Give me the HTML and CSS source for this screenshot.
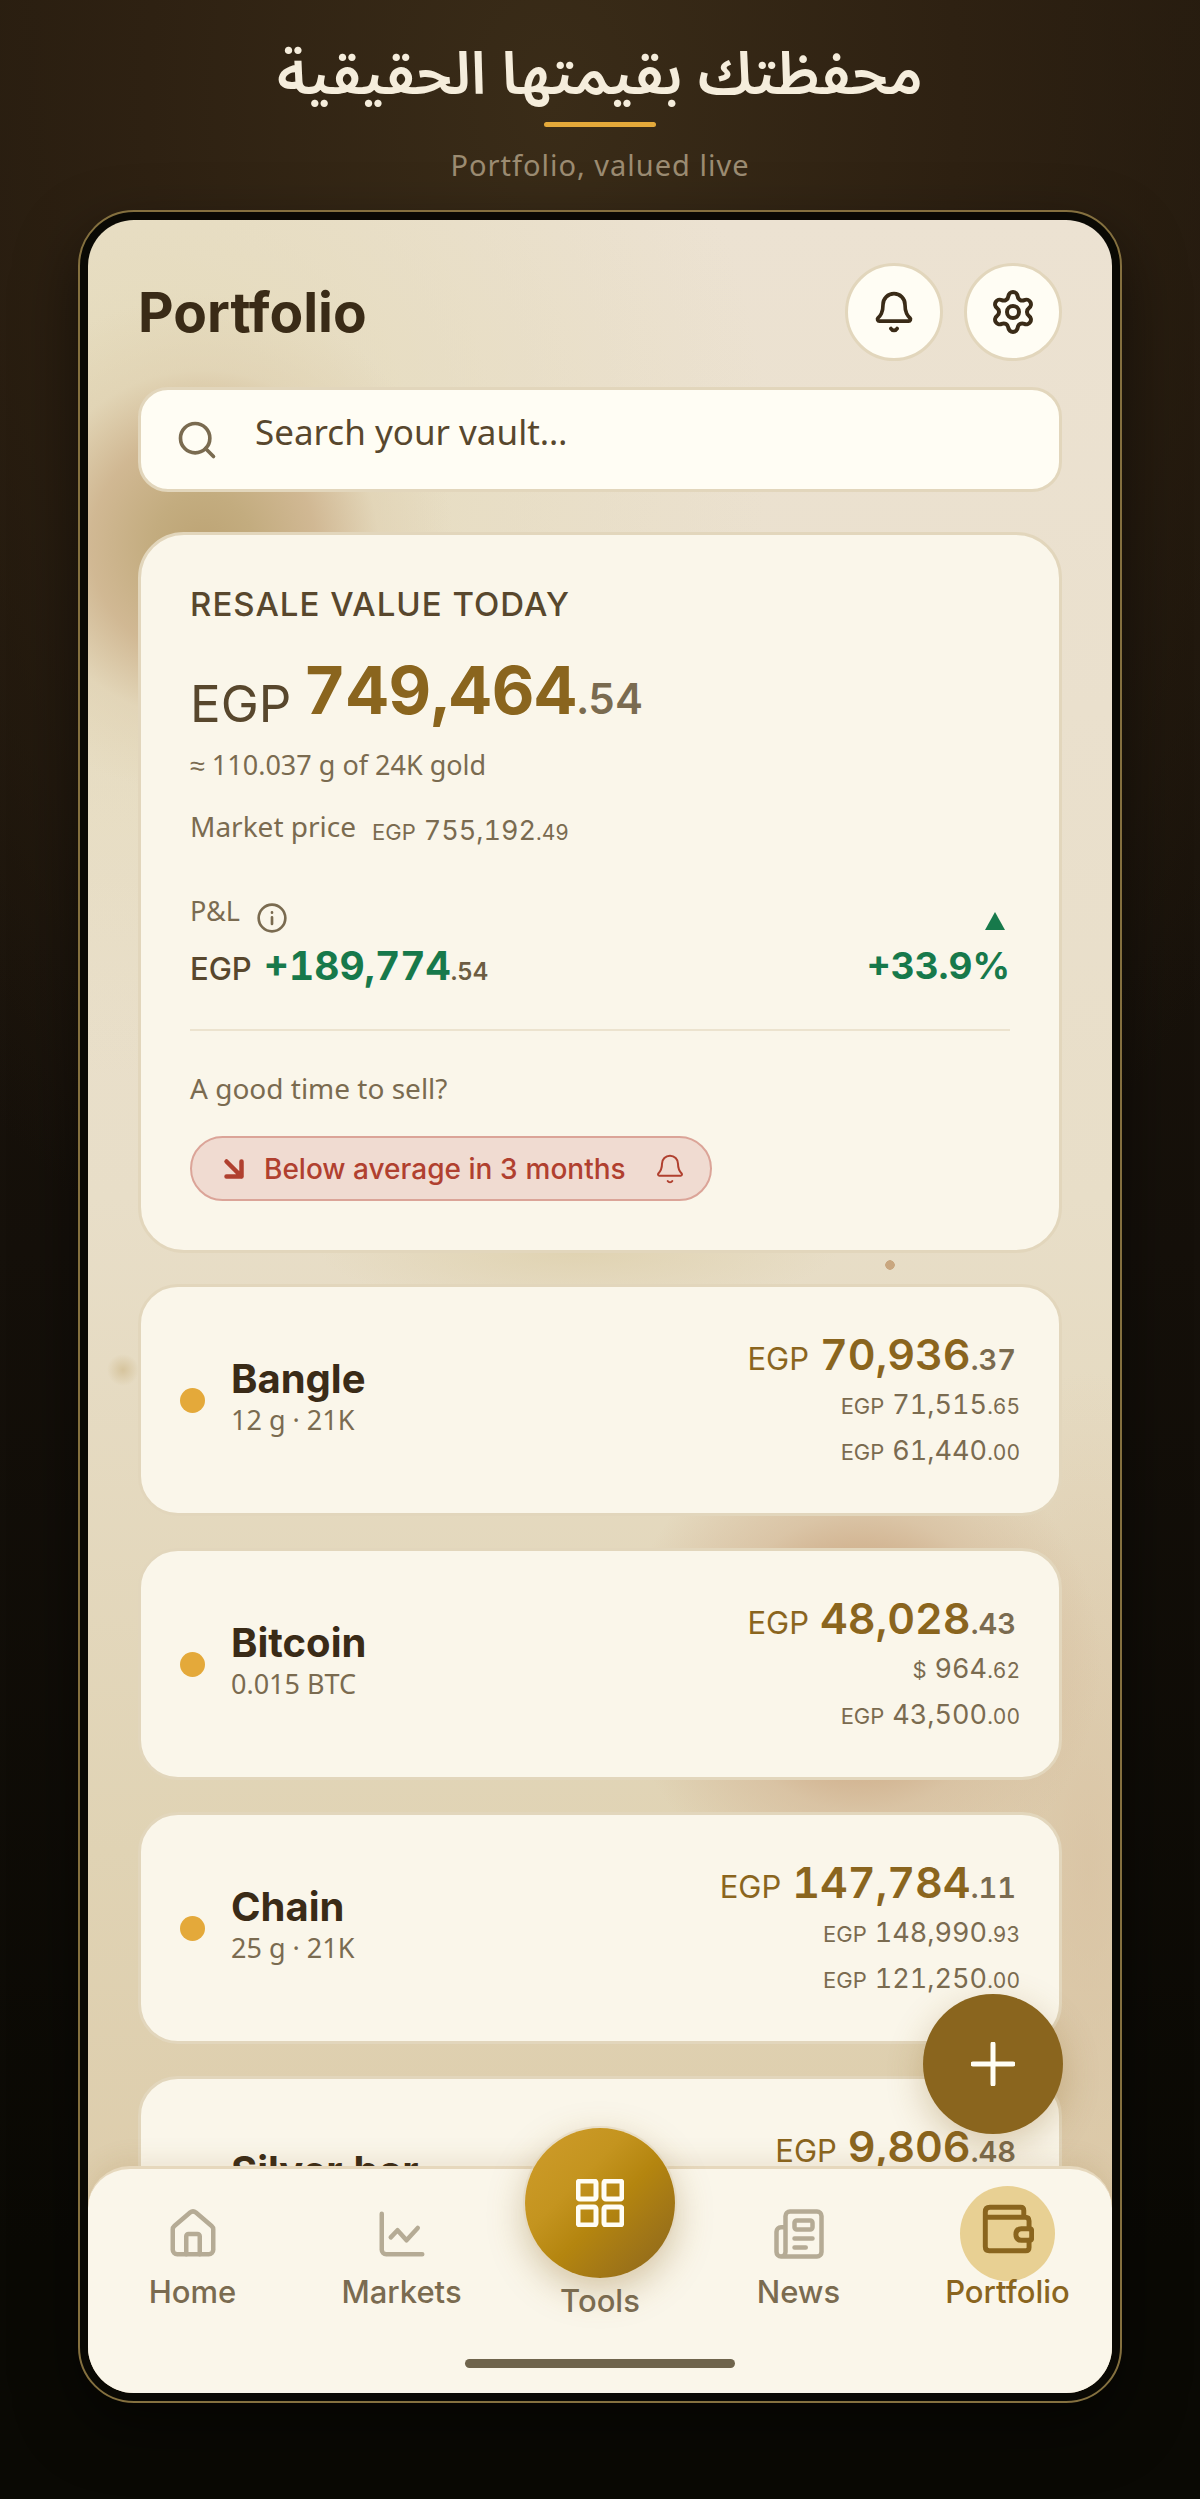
FILE: index.html
```html
<!DOCTYPE html>
<html lang="en">
<head>
<meta charset="utf-8">
<meta name="viewport" content="width=device-width, initial-scale=1">
<title>Portfolio</title>
<link rel="stylesheet" href="styles.css">
</head>
<body>
<svg class="sprite" aria-hidden="true">
  <symbol id="bell" viewBox="0 0 24 24"><path d="M10.268 21a2 2 0 0 0 3.464 0"/><path d="M3.262 15.326A1 1 0 0 0 4 17h16a1 1 0 0 0 .74-1.673C19.41 13.956 18 12.499 18 8A6 6 0 0 0 6 8c0 4.499-1.411 5.956-2.738 7.326"/></symbol>
</svg>

<header class="banner">
  <h1 class="banner-title" lang="ar" dir="rtl">محفظتك بقيمتها الحقيقية</h1>
  <span class="banner-rule"></span>
  <p class="banner-sub">Portfolio, valued live</p>
</header>

<div class="phone">
  <div class="screen">
    <main class="content">
      <div class="topbar">
        <h2 class="topbar-title">Portfolio</h2>
        <button class="round-btn" type="button" aria-label="Notifications"><svg class="icon icon-bell"><use href="#bell"/></svg></button>
        <button class="round-btn" type="button" aria-label="Settings"><svg class="icon icon-gear" viewBox="0 0 24 24"><path d="M9.671 4.136a2.34 2.34 0 0 1 4.659 0 2.34 2.34 0 0 0 3.319 1.915 2.34 2.34 0 0 1 2.33 4.033 2.34 2.34 0 0 0 0 3.831 2.34 2.34 0 0 1-2.33 4.033 2.34 2.34 0 0 0-3.319 1.915 2.34 2.34 0 0 1-4.659 0 2.34 2.34 0 0 0-3.32-1.915 2.34 2.34 0 0 1-2.33-4.033 2.34 2.34 0 0 0 0-3.831A2.34 2.34 0 0 1 6.35 6.051a2.34 2.34 0 0 0 3.319-1.915"/><circle cx="12" cy="12" r="3"/></svg></button>
      </div>

      <label class="search">
        <svg class="icon icon-search" viewBox="0 0 24 24"><circle cx="11" cy="11" r="8"/><path d="m21 21-4.34-4.34"/></svg>
        <input class="search-input" type="search" aria-label="Search your vault" placeholder="Search your vault…">
      </label>

      <section class="card hero">
        <h3 class="hero-label">RESALE VALUE TODAY</h3>
        <p class="hero-amount"><span class="hero-cur">EGP</span><span class="hero-num">749,464<span class="hero-dec">.54</span></span></p>
        <p class="note hero-gold">≈ 110.037 g of 24K gold</p>
        <p class="note hero-market">Market price <span class="amount-s"><span class="cur-s">EGP</span><span>755,192<span class="dec-s">.49</span></span></span></p>
        <div class="pl-head">
          <span class="note pl-label">P&amp;L <svg class="icon icon-info" viewBox="0 0 24 24"><circle cx="12" cy="12" r="10"/><path d="M12 16.500v-5M12 7.800v.2"/></svg></span>
          <svg class="pl-up" viewBox="0 0 20 18"><path d="M10 0 20 18H0z"/></svg>
        </div>
        <div class="pl-row">
          <span class="pl-value"><span class="pl-cur">EGP</span><span class="pl-num">+189,774<span class="pl-dec">.54</span></span></span>
          <span class="pl-num pl-pct">+33.9%</span>
        </div>
        <div class="hero-sell">
          <p class="note">A good time to sell?</p>
          <button class="pill" type="button">
            <svg class="icon icon-arrow" viewBox="0 0 24 24"><path d="m7 7 10 10M17 7v10H7"/></svg>
            <span>Below average in 3 months</span>
            <svg class="icon icon-pill-bell"><use href="#bell"/></svg>
          </button>
        </div>
      </section>

      <ul class="items">
        <li class="card item">
          <span class="dot"></span>
          <div class="item-text"><h3 class="item-name">Bangle</h3><p class="note item-sub">12 g · 21K</p></div>
          <div class="item-values">
            <p class="amount-l"><span class="cur-l">EGP</span><span class="num-l">70,936<span class="dec-l">.37</span></span></p>
            <p class="amount-s"><span class="cur-s">EGP</span><span>71,515<span class="dec-s">.65</span></span></p>
            <p class="amount-s"><span class="cur-s">EGP</span><span>61,440<span class="dec-s">.00</span></span></p>
          </div>
        </li>
        <li class="card item">
          <span class="dot"></span>
          <div class="item-text"><h3 class="item-name">Bitcoin</h3><p class="note item-sub">0.015 BTC</p></div>
          <div class="item-values">
            <p class="amount-l"><span class="cur-l">EGP</span><span class="num-l">48,028<span class="dec-l">.43</span></span></p>
            <p class="amount-s"><span class="cur-s">$</span><span>964<span class="dec-s">.62</span></span></p>
            <p class="amount-s"><span class="cur-s">EGP</span><span>43,500<span class="dec-s">.00</span></span></p>
          </div>
        </li>
        <li class="card item">
          <span class="dot"></span>
          <div class="item-text"><h3 class="item-name">Chain</h3><p class="note item-sub">25 g · 21K</p></div>
          <div class="item-values">
            <p class="amount-l"><span class="cur-l">EGP</span><span class="num-l">147,784<span class="dec-l">.11</span></span></p>
            <p class="amount-s"><span class="cur-s">EGP</span><span>148,990<span class="dec-s">.93</span></span></p>
            <p class="amount-s"><span class="cur-s">EGP</span><span>121,250<span class="dec-s">.00</span></span></p>
          </div>
        </li>
        <li class="card item">
          <span class="dot"></span>
          <div class="item-text"><h3 class="item-name">Silver bar</h3><p class="note item-sub">&nbsp;</p></div>
          <div class="item-values">
            <p class="amount-l"><span class="cur-l">EGP</span><span class="num-l">9,806<span class="dec-l">.48</span></span></p>
          </div>
        </li>
      </ul>
    </main>

    <button class="fab" type="button" aria-label="Add asset"><svg class="icon icon-plus" viewBox="0 0 44 44"><path d="M22 2v40M2 22h40"/></svg></button>

    <nav class="tabbar">
      <div class="tabs">
        <a class="tab" href="#home"><span class="tab-icon"><svg class="icon icon-tab" viewBox="0 0 24 24"><path d="M15 21v-8a1 1 0 0 0-1-1h-4a1 1 0 0 0-1 1v8"/><path d="M3 10a2 2 0 0 1 .709-1.528l7-5.999a2 2 0 0 1 2.582 0l7 5.999A2 2 0 0 1 21 10v9a2 2 0 0 1-2 2H5a2 2 0 0 1-2-2z"/></svg></span><span class="tab-label">Home</span></a>
        <a class="tab" href="#markets"><span class="tab-icon"><svg class="icon icon-tab" viewBox="0 0 24 24"><path d="M3 3v16a2 2 0 0 0 2 2h16"/><path d="m7 13.500 3-3.200 4 4.500 5-5.500"/></svg></span><span class="tab-label">Markets</span></a>
        <a class="tab tab-tools" href="#tools"><span class="tools-disc"><svg class="icon icon-grid" viewBox="0 0 48 48"><rect x="2" y="2" width="18" height="18" rx="2"/><rect x="28" y="2" width="18" height="18" rx="2"/><rect x="2" y="28" width="18" height="18" rx="2"/><rect x="28" y="28" width="18" height="18" rx="2"/></svg></span><span class="tab-label">Tools</span></a>
        <a class="tab" href="#news"><span class="tab-icon"><svg class="icon icon-tab" viewBox="0 0 24 24"><path d="M15 18h-5M18 14h-8"/><path d="M4 22h16a2 2 0 0 0 2-2V4a2 2 0 0 0-2-2H8a2 2 0 0 0-2 2v16a2 2 0 0 1-4 0v-9a2 2 0 0 1 2-2h2"/><rect x="10" y="6" width="8" height="4" rx="1"/></svg></span><span class="tab-label">News</span></a>
        <a class="tab tab-active" href="#portfolio" aria-current="page"><span class="tab-icon"><svg class="icon icon-wallet" viewBox="0 0 158 152"><path d="M127 39V20q0-10-10-10H24Q10 10 10 24v106q0 12 12 12h111q10 0 10-10v-22M143 75V52q0-12-12-12H10"/><path d="M120 75h24q7 0 7 7v21q0 7-7 7h-24q-17 0-17-17t17-18z"/></svg></span><span class="tab-label">Portfolio</span></a>
      </div>
      <span class="home-bar"></span>
    </nav>
  </div>
</div>
</body>
</html>
```

FILE: styles.css
```css
* { box-sizing: border-box; }

body {
  margin: 0;
  height: 100vh;
  display: flex;
  flex-direction: column;
  padding: 0 78px 96px;
  font-family: Inter, "Liberation Sans", sans-serif;
  font-variant-numeric: tabular-nums;
  color: #3a2b17;
  background:
    radial-gradient(ellipse 900px 1300px at 46% 4%, #3a2c18 0%, #2e2112 45%, rgba(30, 21, 11, 0) 100%),
    linear-gradient(180deg, #21180d 0%, #15100a 50%, #0a0904 90%);
}

h1, h2, h3, p, ul { margin: 0; padding: 0; font-weight: inherit; }
ul { list-style: none; }
button { font: inherit; padding: 0; cursor: pointer; }

.sprite { display: none; }

.icon {
  display: block;
  flex: none;
  fill: none;
  stroke: currentColor;
  stroke-width: 2;
  stroke-linecap: round;
  stroke-linejoin: round;
}

/* Banner above the phone */
.banner {
  height: 210px;
  flex: none;
  display: flex;
  flex-direction: column;
  align-items: center;
}
.banner-title {
  height: 122px;
  padding-top: 28px;
  font: 600 59px/96px "Noto Sans Arabic", "Noto Sans", sans-serif;
  color: #f5eddc;
  white-space: nowrap;
}
.banner-rule { width: 112px; height: 5px; border-radius: 3px; background: #e4a93a; }
.banner-sub {
  margin-top: 18px;
  font: 400 29px/40px "Noto Sans", sans-serif;
  letter-spacing: 1px;
  color: #9c8c72;
}

/* Phone */
.phone {
  flex: 1;
  min-height: 0;
  display: flex;
  padding: 8px;
  border: 2px solid #84703f;
  border-radius: 56px;
  background: #0a0904;
  box-shadow: 0 24px 60px rgba(0, 0, 0, 0.5);
}
.screen {
  position: relative;
  flex: 1;
  min-width: 0;
  overflow: hidden;
  border-radius: 46px;
  background:
    radial-gradient(circle 5px at 802px 1045px, #c9a780 90%, transparent 100%),
    radial-gradient(circle 16px at 35px 1150px, #d6c49d 0%, transparent 100%),
    radial-gradient(circle 250px at 115px 325px, #bda475 0%, #c3ac7f 20%, rgba(205, 178, 140, 0.85) 45%, rgba(222, 206, 175, 0.5) 70%, rgba(226, 216, 180, 0) 100%),
    radial-gradient(circle 240px at 773px 1442px, #cba583 0%, #cfae8a 40%, rgba(214, 188, 156, 0.7) 62%, rgba(223, 207, 175, 0) 100%),
    radial-gradient(ellipse 260px 60px at 490px 1030px, rgba(222, 208, 172, 0.8) 0%, rgba(226, 216, 180, 0) 100%),
    radial-gradient(ellipse 160px 500px at 1000px 1650px, rgba(214, 188, 156, 0.6) 0%, rgba(223, 207, 175, 0) 100%),
    radial-gradient(circle 620px at 60px 240px, #e4dab9 0%, rgba(230, 220, 196, 0) 100%),
    linear-gradient(180deg, #ece2d2 0%, #e8dec8 45%, #e0d3b4 75%, #dccaa8 100%);
}
.content {
  display: flex;
  flex-direction: column;
  padding: 43px 50px 0;
}

.topbar { display: flex; align-items: center; gap: 21px; }
.topbar-title { flex: 1; font-weight: 700; font-size: 55px; line-height: 66px; }
.round-btn {
  width: 98px;
  height: 98px;
  display: grid;
  place-items: center;
  border: 3px solid #e2d6bc;
  border-radius: 50%;
  background: #fffdf4;
  color: #3a2b17;
}
.icon-bell, .icon-search { width: 44px; height: 44px; }
.icon-gear { width: 48px; height: 48px; }

.search {
  margin-top: 26px;
  height: 105px;
  display: flex;
  align-items: center;
  gap: 36px;
  padding: 0 34px;
  border: 3px solid #e2d6bc;
  border-radius: 30px;
  background: #fffdf4;
  color: #7a6b50;
}
.search-input {
  flex: 1;
  min-width: 0;
  padding: 0 0 16px;
  border: 0;
  outline: 0;
  background: none;
  font: 400 35px/46px "Noto Sans", sans-serif;
  color: #58472d;
}
.search-input::placeholder { color: #58472d; opacity: 1; }

.card { border: 3px solid #e2d6bc; background: #faf6ea; }
.note { font: 400 28px/38px "Noto Sans", sans-serif; color: #7a6b50; }

/* Resale value card */
.hero { margin-top: 40px; padding: 49px; border-radius: 46px; }
.hero-label { font-weight: 500; font-size: 33px; line-height: 40px; letter-spacing: 1px; color: #58472d; }
.hero-amount { display: flex; align-items: flex-end; gap: 12px; margin-top: 26px; }
.hero-cur { font-size: 51px; line-height: 52px; color: #58472d; }
.hero-num { font-weight: 700; font-size: 66px; line-height: 80px; color: #8a651e; }
.hero-dec { font-weight: 600; font-size: 42px; line-height: 1; color: #7a6b50; }
.hero-gold { margin-top: 16px; font-size: 27px; }
.hero-market { display: flex; gap: 16px; margin-top: 23px; }
.hero-market .amount-s { line-height: 38px; padding-top: 5px; margin-bottom: -5px; }

.pl-head { display: flex; justify-content: space-between; align-items: flex-end; margin-top: 47px; }
.pl-label { display: flex; align-items: flex-end; gap: 16px; font-size: 27px; }
.icon-info { width: 32px; height: 32px; margin-bottom: -4px; }
.pl-up { width: 20px; height: 18px; margin-right: 5px; fill: #17794b; }
.pl-row { display: flex; justify-content: space-between; margin-top: 13px; line-height: 46px; }
.pl-value { display: flex; align-items: baseline; gap: 12px; }
.pl-cur { font-size: 31px; line-height: 1; font-weight: 500; color: #58472d; }
.pl-num { font-size: 39px; font-weight: 700; color: #17794b; }
.pl-pct { font-size: 37px; }
.pl-dec { font-size: 24px; line-height: 1; font-weight: 600; color: #6d5d42; }

.hero-sell { margin-top: 40px; padding-top: 38px; border-top: 2px solid #ece3cf; }
.pill {
  display: flex;
  align-items: center;
  height: 65px;
  margin-top: 29px;
  padding: 0 24px;
  border: 2px solid #dba498;
  border-radius: 33px;
  background: #f0dbd1;
  color: #b0402f;
  font-weight: 500;
  font-size: 28px;
}
.icon-arrow { width: 36px; height: 36px; margin-right: 12px; stroke-width: 3; }
.icon-pill-bell { width: 32px; height: 32px; margin-left: 28px; stroke-width: 1.5; }

/* Holdings */
.items { display: flex; flex-direction: column; gap: 32px; margin-top: 31px; }
.item { display: flex; align-items: center; height: 232px; padding: 0 39px; border-radius: 40px; }
.dot { width: 25px; height: 25px; border-radius: 50%; background: #e4a93a; }
.item-text { flex: 1; padding: 0 0 8px 26px; }
.item-name { font-weight: 700; font-size: 40px; line-height: 48px; }
.item-sub { font-size: 27px; line-height: 34px; }
.item-values { display: flex; flex-direction: column; align-items: flex-end; min-height: 148px; }

.amount-l { display: flex; align-items: flex-end; gap: 11px; padding-right: 4px; color: #8a651e; }
.cur-l { font-size: 31px; line-height: 46px; }
.num-l { font-weight: 600; font-size: 43px; line-height: 56px; }
.dec-l { font-size: 29px; line-height: 1; color: #7a6b50; }
.amount-s { display: flex; align-items: baseline; gap: 8px; font: 400 27px/46px Inter, sans-serif; font-variant-numeric: tabular-nums; color: #7a6b50; }
.cur-s { font-size: 22px; line-height: 1; }
.dec-s { font-size: 21px; line-height: 1; }

/* Floating add button */
.fab {
  position: absolute;
  right: 49px;
  bottom: 259px;
  width: 140px;
  height: 140px;
  display: grid;
  place-items: center;
  border: 0;
  border-radius: 50%;
  background: #8a651e;
  color: #fffdf4;
  box-shadow: 0 12px 36px rgba(138, 101, 30, 0.3);
}
.icon-plus { width: 44px; height: 44px; stroke-width: 5; }

/* Bottom navigation */
.tabbar {
  position: absolute;
  left: 0;
  right: 0;
  bottom: 0;
  height: 227px;
  border-top: 3px solid #e6d8bd;
  border-radius: 42px 42px 0 0;
  background: #faf6ea;
  box-shadow: 0 -6px 24px rgba(138, 101, 30, 0.12);
}
.tabs { display: flex; align-items: flex-start; height: 190px; }
.tab {
  flex: 1 1 0;
  display: flex;
  flex-direction: column;
  align-items: center;
  padding-top: 17px;
  color: #7a6b50;
  text-decoration: none;
}
.tab-icon {
  width: 95px;
  height: 95px;
  margin-bottom: -7px;
  display: grid;
  place-items: center;
  border-radius: 50%;
  color: #b5ab95;
}
.tab-label { position: relative; font-weight: 500; font-size: 31px; line-height: 36px; }
.icon-tab { width: 54px; height: 54px; }
.tab-active { color: #8a651e; }
.tab-active .tab-icon { background: #e8d093; color: #8a651e; padding-bottom: 10px; }
.icon-wallet { width: 52px; height: 50px; stroke-width: 15; }

.tab-tools { flex: 0 0 188px; margin-top: -41px; padding-top: 0; }
.tools-disc {
  width: 150px;
  height: 150px;
  margin-bottom: 5px;
  display: grid;
  place-items: center;
  border-radius: 50%;
  background: linear-gradient(135deg, #cc9a28 10%, #c4941f 35%, #b4850f 55%, #a67a15 70%, #8a651e 100%);
  color: #fffdf4;
  box-shadow: 0 0 0 2px rgba(226, 214, 188, 0.6), 0 12px 36px rgba(138, 101, 30, 0.35);
}
.icon-grid { width: 48px; height: 48px; stroke-width: 5; }

.home-bar {
  display: block;
  width: 270px;
  height: 9px;
  margin: 0 auto;
  border-radius: 5px;
  background: #6f644c;
}
```
